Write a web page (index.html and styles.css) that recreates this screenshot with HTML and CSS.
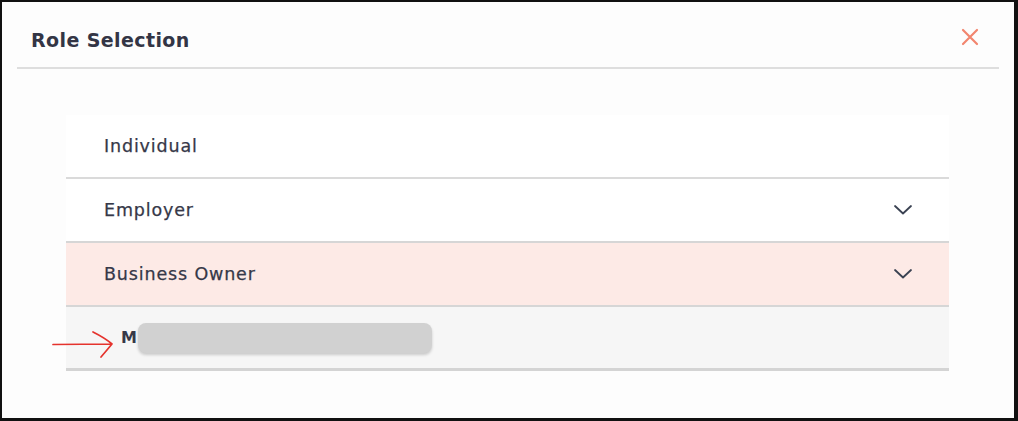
FILE: index.html
```html
<!DOCTYPE html>
<html>
<head>
<meta charset="utf-8">
<link rel="stylesheet" href="styles.css">
</head>
<body>
<div class="frame">
  <div class="modal">
    <div class="header">
      <h1 class="title">Role Selection</h1>
      <button class="close" aria-label="Close">
        <svg width="18" height="18" viewBox="0 0 18 18"><path d="M2 2 L16 16 M16 2 L2 16" stroke="#f2866f" stroke-width="2.2" stroke-linecap="round"/></svg>
      </button>
    </div>
    <div class="body">
      <div class="list">
        <div class="row row-first"><span class="label">Individual</span></div>
        <div class="row"><span class="label">Employer</span>
          <svg class="chev" width="20" height="12" viewBox="0 0 20 12"><path d="M2 2 L10 9.5 L18 2" fill="none" stroke="#3a4252" stroke-width="1.8" stroke-linecap="round" stroke-linejoin="round"/></svg>
        </div>
        <div class="row row-active"><span class="label">Business Owner</span>
          <svg class="chev" width="20" height="12" viewBox="0 0 20 12"><path d="M2 2 L10 9.5 L18 2" fill="none" stroke="#3a4252" stroke-width="1.8" stroke-linecap="round" stroke-linejoin="round"/></svg>
        </div>
        <div class="row row-sub">
          <svg class="arrow" width="64" height="30" viewBox="0 0 64 30"><path d="M1 14.5 Q30 14.2 59 14 M41 2 Q53 8 60 14 Q55 20 49 27" fill="none" stroke="#e5332d" stroke-width="1.7" stroke-linecap="round" stroke-linejoin="round"/></svg>
          <span class="label sub-label">M</span><span class="redact"></span>
        </div>
      </div>
    </div>
  </div>
</div>
</body>
</html>
```
FILE: styles.css
```css
* { box-sizing: border-box; }
html, body { margin: 0; padding: 0; }
body {
  width: 1018px;
  height: 421px;
  font-family: "DejaVu Sans", "Open Sans", sans-serif;
  background: #fff;
}
.frame {
  width: 1018px;
  height: 421px;
  border-style: solid;
  border-color: #111;
  border-width: 2px 4px 3px 2px;
  background: #fdfdfd;
}
.modal {
  padding: 0 15px 0 15px;
}
.header {
  height: 67px;
  display: flex;
  align-items: center;
  justify-content: space-between;
  border-bottom: 2px solid #dedede;
  padding: 10px 20px 0 14px;
}
.title {
  margin: 0;
  font-size: 19px;
  font-weight: 700;
  color: #333545;
  letter-spacing: 0.4px;
}
.close {
  border: 0;
  background: none;
  padding: 0;
  width: 18px;
  height: 18px;
  margin-top: -6px;
  display: flex;
}
.body {
  padding: 46px 50px 0 49px;
}
.list {
  display: flex;
  flex-direction: column;
}
.row {
  height: 64px;
  display: flex;
  align-items: center;
  justify-content: space-between;
  padding: 0 38px 0 38px;
  background: #fff;
  border-bottom: 2px solid #d6d6d6;
  position: relative;
}
.row-first { border-bottom: 2px solid #dadada; }
.row-active { background: #fdeae6; }
.row-sub {
  background: #f6f6f6;
  justify-content: flex-start;
  padding-left: 55px;
  border-bottom: 3px solid #d4d4d4;
}
.label {
  font-size: 17.5px;
  font-weight: 400;
  color: #363848;
  letter-spacing: 0.85px;
  -webkit-text-stroke: 0.25px #363848;
}
.sub-label { font-weight: 700; font-size: 16px; letter-spacing: 0; -webkit-text-stroke: 0; }
.redact {
  width: 294px;
  height: 30px;
  margin-left: 1px;
  border-radius: 8px;
  background: #d1d1d1;
  box-shadow: 0 2px 3px rgba(0,0,0,0.18);
}
.chev { margin-right: -2px; }
.arrow {
  position: absolute;
  left: -14px;
  top: 23px;
}
```
